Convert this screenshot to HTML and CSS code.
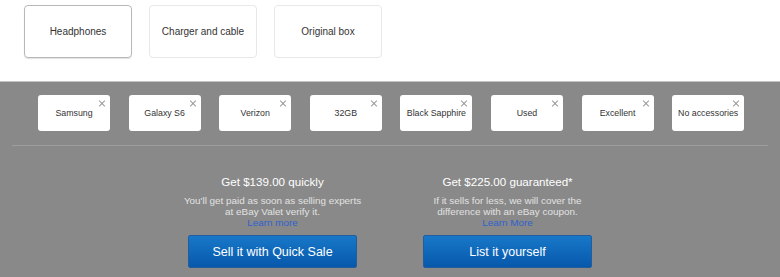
FILE: index.html
```html
<!DOCTYPE html>
<html lang="en">
<head>
    <meta charset="UTF-8" />
    <title>Sell your phone</title>
    <link rel="stylesheet" href="styles.css">
</head>
<body>
<section class="accessories">
    <div class="option selected">Headphones</div>
    <div class="option">Charger and cable</div>
    <div class="option">Original box</div>
</section>

<section class="summary">
    <div class="tags">
        <div class="tag">Samsung<span class="remove"></span></div>
        <div class="tag">Galaxy S6<span class="remove"></span></div>
        <div class="tag">Verizon<span class="remove"></span></div>
        <div class="tag">32GB<span class="remove"></span></div>
        <div class="tag">Black Sapphire<span class="remove"></span></div>
        <div class="tag">Used<span class="remove"></span></div>
        <div class="tag">Excellent<span class="remove"></span></div>
        <div class="tag">No accessories<span class="remove"></span></div>
    </div>

    <hr class="divider">

    <div class="offers">
        <div class="offer">
            <h2>Get $139.00 quickly</h2>
            <p>You'll get paid as soon as selling experts<br>at eBay Valet verify it.<br><a href="#">Learn more</a></p>
            <button class="sell-btn">Sell it with Quick Sale</button>
        </div>
        <div class="offer">
            <h2>Get $225.00 guaranteed*</h2>
            <p>If it sells for less, we will cover the<br>difference with an eBay coupon.<br><a href="#">Learn More</a></p>
            <button class="sell-btn">List it yourself</button>
        </div>
    </div>
</section>
</body>
</html>
```

FILE: styles.css
```css
* {
    box-sizing: border-box;
    font-family: 'Liberation Sans', Arial, sans-serif;
}
body {
    margin: 0;
    padding: 0;
    background: #fff;
}
.accessories {
    display: flex;
    gap: 17px;
    padding: 5px 0 0 24px;
    height: 81px;
}
.option {
    width: 108px;
    height: 53px;
    display: flex;
    align-items: center;
    justify-content: center;
    border: 1px solid #e8e8e8;
    border-radius: 4px;
    font-size: 10px;
    color: #333;
}
.option.selected {
    border-color: #b8b8b8;
    box-shadow: 0 1px 1px rgba(0,0,0,0.12);
}
.summary {
    background: #898989;
    border-top: 1px solid #c4c4c4;
    min-height: 196px;
}
.tags {
    display: flex;
    gap: 18.6px;
    padding: 13px 0 0 38px;
}
.tag {
    position: relative;
    width: 72px;
    height: 36px;
    background: #fff;
    border-radius: 3px;
    display: flex;
    align-items: center;
    justify-content: center;
    font-size: 8.8px;
    color: #333;
}
.remove {
    position: absolute;
    top: 5px;
    right: 5px;
    width: 6px;
    height: 6px;
}
.remove::before, .remove::after {
    content: "";
    position: absolute;
    left: -1px;
    top: 2.5px;
    width: 8px;
    height: 1px;
    background: #999;
    transform: rotate(45deg);
}
.remove::after {
    transform: rotate(-45deg);
}
.divider {
    border: none;
    border-top: 1px solid #9d9d9d;
    margin: 14px 12px 0;
}
.offers {
    display: flex;
    justify-content: center;
    gap: 66px;
    padding-top: 29px;
}
.offer {
    width: 169px;
    text-align: center;
}
.offer h2 {
    margin: 0;
    font-size: 11.6px;
    line-height: 14px;
    font-weight: normal;
    color: #fff;
}
.offer p {
    margin: 7px -10px 0;
    font-size: 9.9px;
    line-height: 10.8px;
    color: #e2e2e2;
}
.offer a {
    color: #2f62cc;
    text-decoration: none;
}
.sell-btn {
    margin-top: 7px;
    width: 169px;
    height: 33px;
    border: 1px solid #245d9e;
    border-radius: 2px;
    background: linear-gradient(#1878c9, #0758ab);
    color: #fff;
    font-size: 12.5px;
    cursor: pointer;
}
```
